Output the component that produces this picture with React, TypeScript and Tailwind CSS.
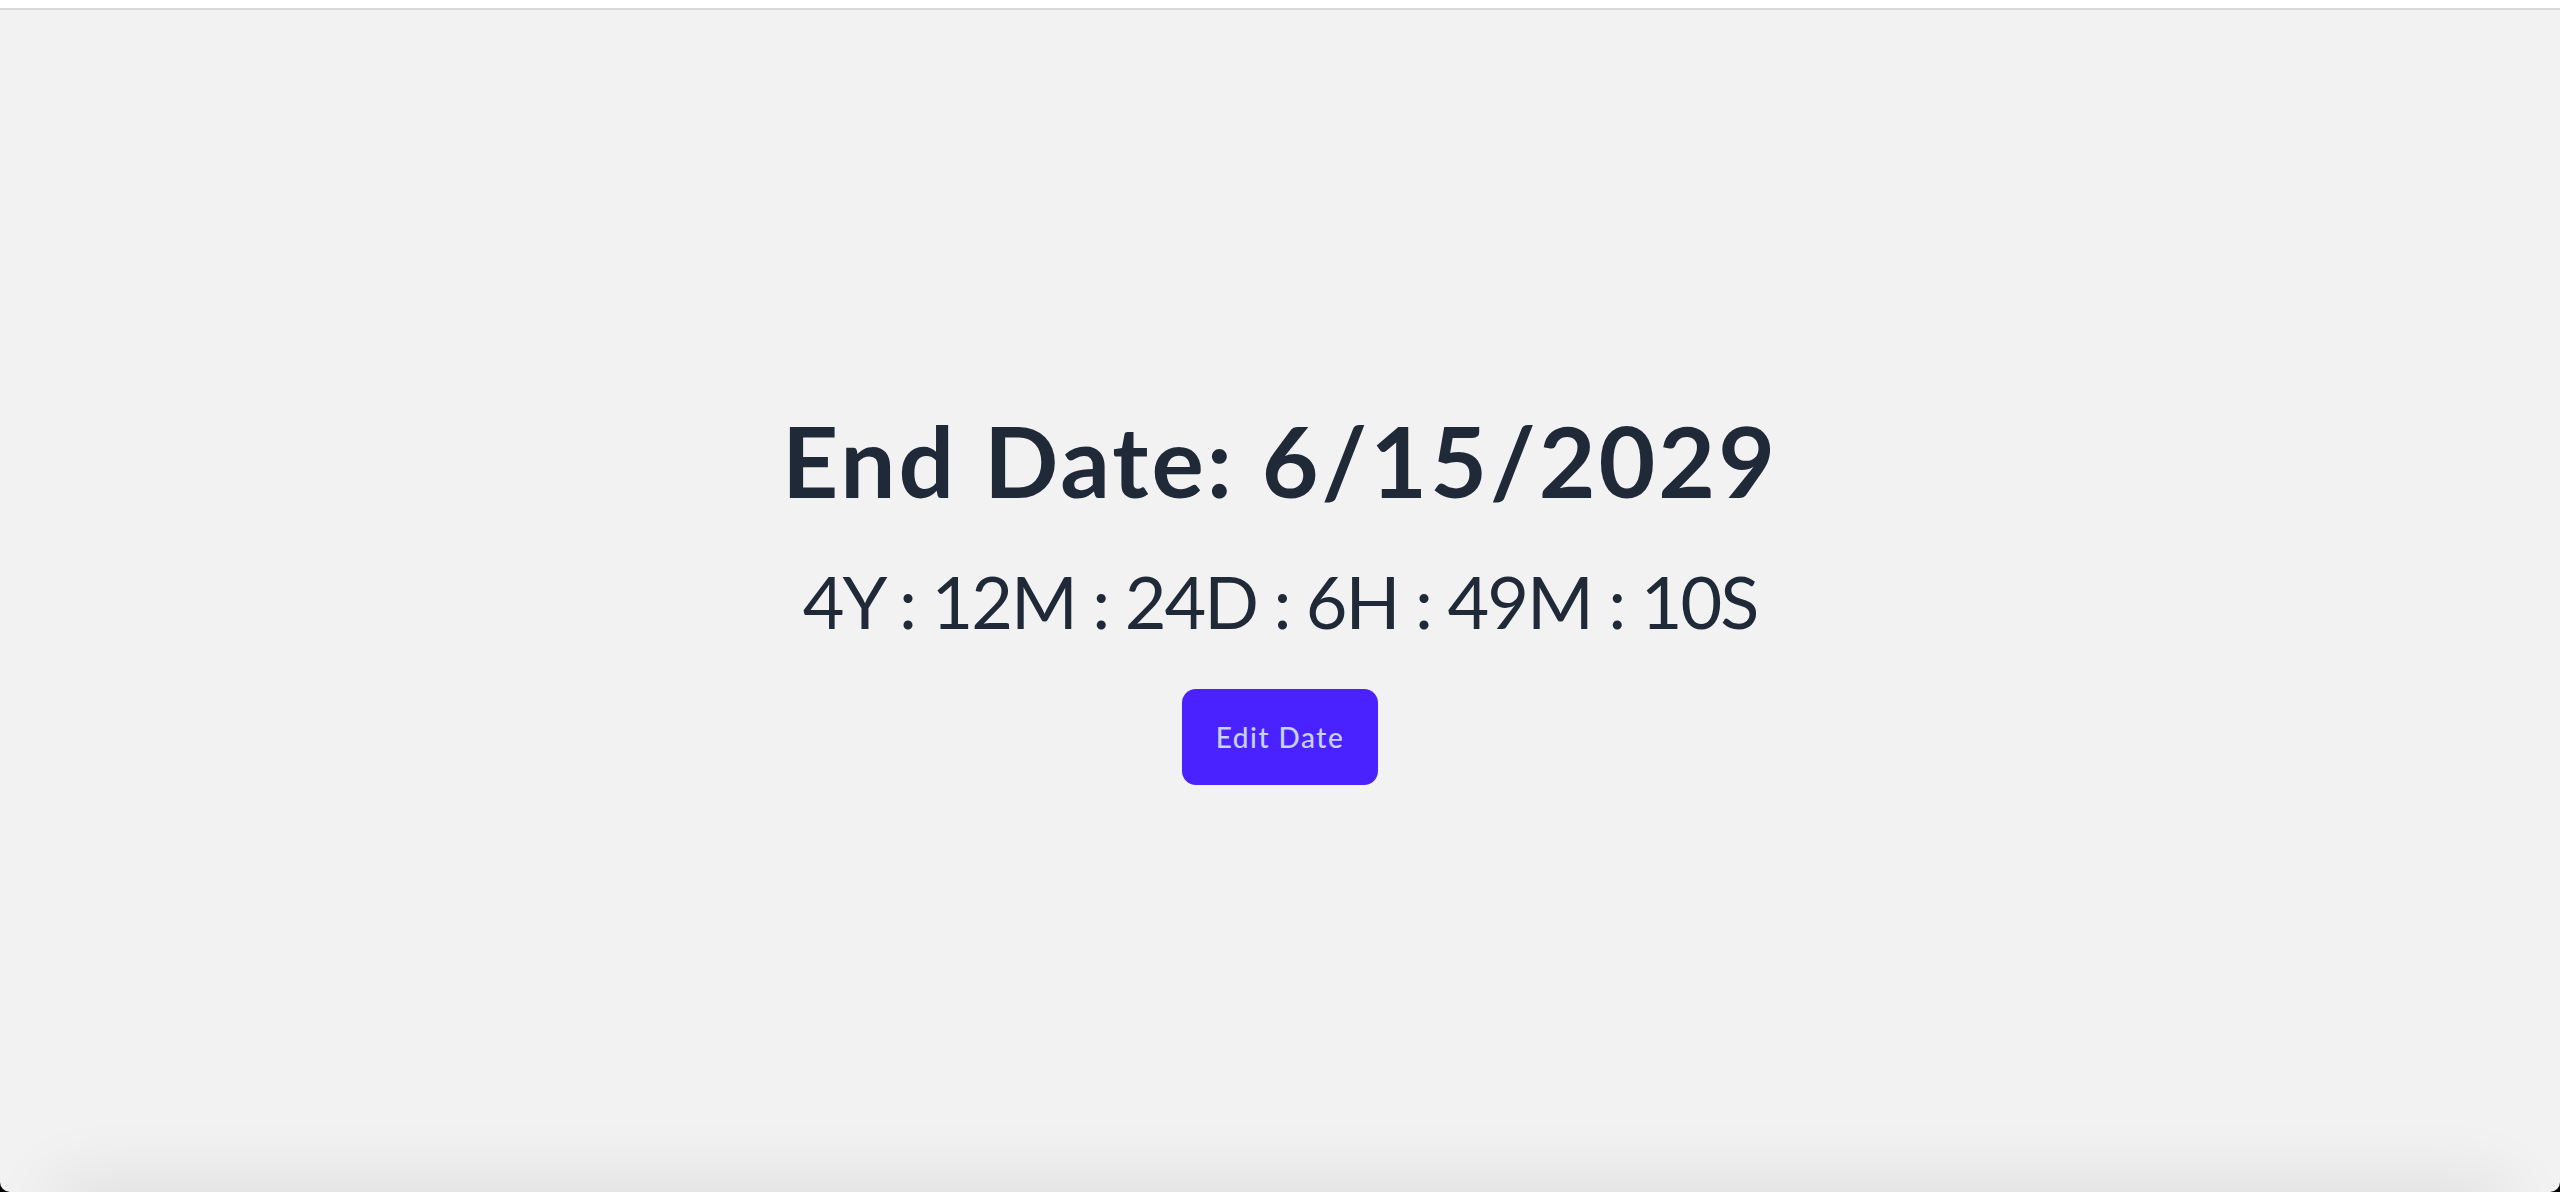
import { useState } from 'react';

export default function App() {
  const [endDate] = useState('6/15/2029');

  return (
    <div className="flex h-[1192px] w-full flex-col overflow-hidden bg-black font-['Lato',sans-serif]">
      <div className="h-2 w-full shrink-0 bg-white" />

      <main className="relative flex flex-1 flex-col items-center overflow-hidden rounded-b-[10px] border-t-2 border-[#d9d9d9] bg-[#f2f2f2] pt-[401px]">
        <h1 className="text-[98px] font-bold leading-none tracking-[3px] text-[#1f2937]">
          End Date: {endDate}
        </h1>
        <p className="mt-[56px] text-[72px] leading-none tracking-[-2px] text-[#1f2937]">
          4Y : 12M : 24D : 6H : 49M : 10S
        </p>
        <button className="mt-[52px] h-[96px] w-[196px] rounded-[14px] bg-[#4a22ff] text-[28px] font-medium tracking-[1.5px] text-indigo-200">
          Edit Date
        </button>

        {/* soft shade along the bottom edge */}
        <div className="pointer-events-none absolute -bottom-10 left-16 right-16 h-10 shadow-[0_0_70px_10px_rgba(0,0,0,0.09)]" />
      </main>
    </div>
  );
}
